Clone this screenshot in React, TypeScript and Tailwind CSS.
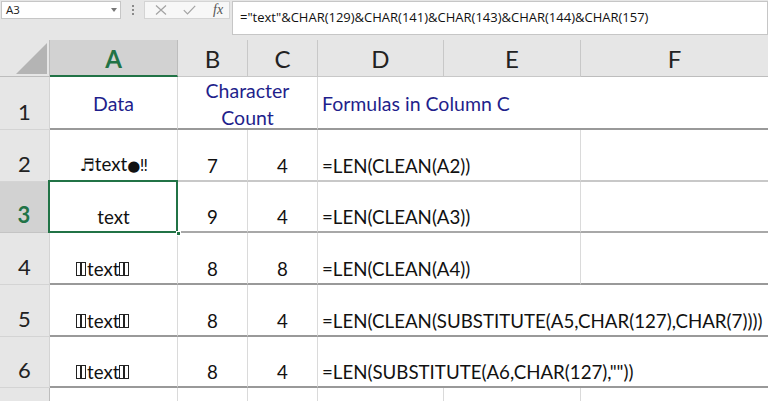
import React from "react";

function Tofu() {
  return <span className="inline-block w-[5px] h-[14px] border border-[#222] mb-[3px]" />;
}

function TofuText() {
  return (
    <span className="inline-flex items-end">
      <Tofu />
      <Tofu />
      <span className="ml-[1px]">text</span>
      <Tofu />
      <Tofu />
    </span>
  );
}

export default function App() {
  const rowHead = "flex items-end justify-center pb-[5px] leading-[24px] bg-[#e6e6e6] border-r border-[#bdbdbd] border-b border-[#d4d4d4] text-[22px] text-[#222]";
  const vline = "border-r border-[#dadada]";
  const num = "flex items-end justify-center pb-[4px] leading-[20px] text-[18.7px]";
  const formula = "flex items-end pl-[4px] pb-[4px] leading-[20px] text-[18.7px] whitespace-nowrap";
  return (
    <div className="w-[768px] h-[401px] overflow-hidden bg-[#e6e6e6] font-['Lato',sans-serif] text-[#111]">
      {/* Formula bar */}
      <div className="h-[40px] flex items-start pt-[1px]">
        <div className="ml-[1px] w-[120px] h-[18px] bg-white border border-[#c6c6c6] flex items-center justify-between pl-[4px] pr-[3px] font-['Open_Sans',sans-serif] text-[11.5px] text-[#222]">
          <span>A3</span>
          <svg width="6" height="4" viewBox="0 0 6 4"><path d="M0 0h6L3 4z" fill="#777" /></svg>
        </div>
        <div className="w-[23px] h-[18px] flex items-center justify-center">
          <div className="flex flex-col gap-[2px]">
            <span className="w-[2px] h-[2px] bg-[#8a8a8a]" />
            <span className="w-[2px] h-[2px] bg-[#8a8a8a]" />
            <span className="w-[2px] h-[2px] bg-[#8a8a8a]" />
          </div>
        </div>
        <div className="w-[86px] h-[18px] bg-[#f7f7f7] border border-[#d4d4d4] flex items-center">
          <svg className="ml-[10px]" width="12" height="10" viewBox="0 0 12 10">
            <path d="M1 0.5L11 9.5M11 0.5L1 9.5" stroke="#a3a3a3" strokeWidth="1.2" fill="none" />
          </svg>
          <svg className="ml-[16px]" width="13" height="10" viewBox="0 0 13 10">
            <path d="M0.8 5.2L4.5 9L12.2 0.8" stroke="#a3a3a3" strokeWidth="1.2" fill="none" />
          </svg>
          <span className="ml-[17px] font-['Liberation_Serif',serif] italic text-[14px] text-[#555] leading-none">fx</span>
        </div>
        <div className="ml-[2px] flex-1 h-[34px] bg-white border border-[#c6c6c6] flex items-start pt-[6px] pl-[7px] font-['Open_Sans',sans-serif] text-[13px] text-[#111] whitespace-nowrap">
          ="text"&amp;CHAR(129)&amp;CHAR(141)&amp;CHAR(143)&amp;CHAR(144)&amp;CHAR(157)
        </div>
      </div>

      {/* Sheet grid */}
      <div className="grid grid-cols-[50px_128px_70px_70px_126px_137px_187px] grid-rows-[37px_53px_52px_51px_52px_52px_51px_40px] bg-white">
        {/* Header row */}
        <div className="bg-[#e6e6e6] border-r border-[#bdbdbd] border-b border-[#bdbdbd] flex items-end justify-end pr-[2px] pb-[2px]">
          <svg width="31" height="31" viewBox="0 0 31 31"><path d="M31 0V31H0z" fill="#b4b4b4" /></svg>
        </div>
        <div className="bg-[#d2d2d2] border-r border-[#bdbdbd] border-b-2 border-b-[#217346] flex items-center justify-center pt-[2px] text-[24px] font-bold text-[#217346]">A</div>
        <div className="bg-[#e6e6e6] border-r border-[#c8c8c8] border-b border-[#bdbdbd] flex items-center justify-center pt-[2px] text-[24px] text-[#222]">B</div>
        <div className="bg-[#e6e6e6] border-r border-[#c8c8c8] border-b border-[#bdbdbd] flex items-center justify-center pt-[2px] text-[24px] text-[#222]">C</div>
        <div className="bg-[#e6e6e6] border-r border-[#c8c8c8] border-b border-[#bdbdbd] flex items-center justify-center pt-[2px] text-[24px] text-[#222]">D</div>
        <div className="bg-[#e6e6e6] border-r border-[#c8c8c8] border-b border-[#bdbdbd] flex items-center justify-center pt-[2px] text-[24px] text-[#222]">E</div>
        <div className="bg-[#e6e6e6] border-b border-[#bdbdbd] flex items-center justify-center pt-[2px] text-[24px] text-[#222]">F</div>

        {/* Row 1 */}
        <div className={rowHead}>1</div>
        <div className={`${vline} border-b-2 border-b-[#999] flex items-center justify-center pt-[3px] text-[19.5px] text-[#1f1f8c]`}>Data</div>
        <div className={`col-span-2 ${vline} border-b-2 border-b-[#999] flex flex-col items-center justify-center pt-[2px] text-[19.5px] leading-[27px] text-[#1f1f8c]`}>
          <span>Character</span>
          <span>Count</span>
        </div>
        <div className="col-span-3 border-b-2 border-b-[#999] flex items-center pt-[3px] pl-[4px] text-[19.5px] text-[#1f1f8c] whitespace-nowrap">Formulas in Column C</div>

        {/* Row 2 */}
        <div className={rowHead}>2</div>
        <div className={`${vline} border-b-2 border-b-[#c8c8c8] ${num}`}>
          <span><span className="font-['DejaVu_Sans',sans-serif] text-[17px]">♬</span>text<span className="font-['DejaVu_Sans',sans-serif] text-[15px]">●‼</span></span>
        </div>
        <div className={`${vline} border-b-2 border-b-[#c8c8c8] ${num}`}>7</div>
        <div className={`${vline} border-b-2 border-b-[#c8c8c8] ${num}`}>4</div>
        <div className={`col-span-2 ${vline} border-b-2 border-b-[#c8c8c8] ${formula}`}>=LEN(CLEAN(A2))</div>
        <div className="border-b-2 border-b-[#c8c8c8]" />

        {/* Row 3 */}
        <div className="flex items-end justify-center pb-[5px] leading-[24px] bg-[#d2d2d2] border-r-2 border-[#217346] border-b border-b-[#c4c4c4] text-[22px] font-bold text-[#217346]">3</div>
        <div className={`relative ${vline} border-b-2 border-b-[#a8a8a8] ${num}`}>
          text
          <div className="absolute left-[-2px] top-[-2px] right-[-1px] bottom-[-2px] border-2 border-[#217346]" />
          <div className="absolute right-[-4px] bottom-[-5px] w-[5px] h-[5px] bg-[#217346] border border-white" />
        </div>
        <div className={`${vline} border-b-2 border-b-[#a8a8a8] ${num}`}>9</div>
        <div className={`${vline} border-b-2 border-b-[#a8a8a8] ${num}`}>4</div>
        <div className={`col-span-2 ${vline} border-b-2 border-b-[#a8a8a8] ${formula}`}>=LEN(CLEAN(A3))</div>
        <div className="border-b-2 border-b-[#a8a8a8]" />

        {/* Row 4 */}
        <div className={rowHead}>4</div>
        <div className={`${vline} border-b-2 border-b-[#999] flex items-end justify-start pl-[26px] pb-[4px] leading-[20px] text-[18.7px]`}><TofuText /></div>
        <div className={`${vline} border-b-2 border-b-[#999] ${num}`}>8</div>
        <div className={`${vline} border-b-2 border-b-[#999] ${num}`}>8</div>
        <div className={`col-span-2 ${vline} border-b-2 border-b-[#999] ${formula}`}>=LEN(CLEAN(A4))</div>
        <div className="border-b-2 border-b-[#999]" />

        {/* Row 5 */}
        <div className={rowHead}>5</div>
        <div className={`${vline} border-b-2 border-b-[#999] flex items-end justify-start pl-[26px] pb-[4px] leading-[20px] text-[18.7px]`}><TofuText /></div>
        <div className={`${vline} border-b-2 border-b-[#999] ${num}`}>8</div>
        <div className={`${vline} border-b-2 border-b-[#999] ${num}`}>4</div>
        <div className={`col-span-3 border-b-2 border-b-[#999] ${formula}`}>=LEN(CLEAN(SUBSTITUTE(A5,CHAR(127),CHAR(7))))</div>

        {/* Row 6 */}
        <div className={rowHead}>6</div>
        <div className={`${vline} border-b-2 border-b-[#999] flex items-end justify-start pl-[26px] pb-[4px] leading-[20px] text-[18.7px]`}><TofuText /></div>
        <div className={`${vline} border-b-2 border-b-[#999] ${num}`}>8</div>
        <div className={`${vline} border-b-2 border-b-[#999] ${num}`}>4</div>
        <div className={`col-span-3 border-b-2 border-b-[#999] ${formula}`}>=LEN(SUBSTITUTE(A6,CHAR(127),""))</div>

        {/* Row 7 */}
        <div className="bg-[#e6e6e6] border-r border-[#bdbdbd]" />
        <div className={vline} />
        <div className={vline} />
        <div className={vline} />
        <div className={vline} />
        <div className={vline} />
        <div />
      </div>
    </div>
  );
}
